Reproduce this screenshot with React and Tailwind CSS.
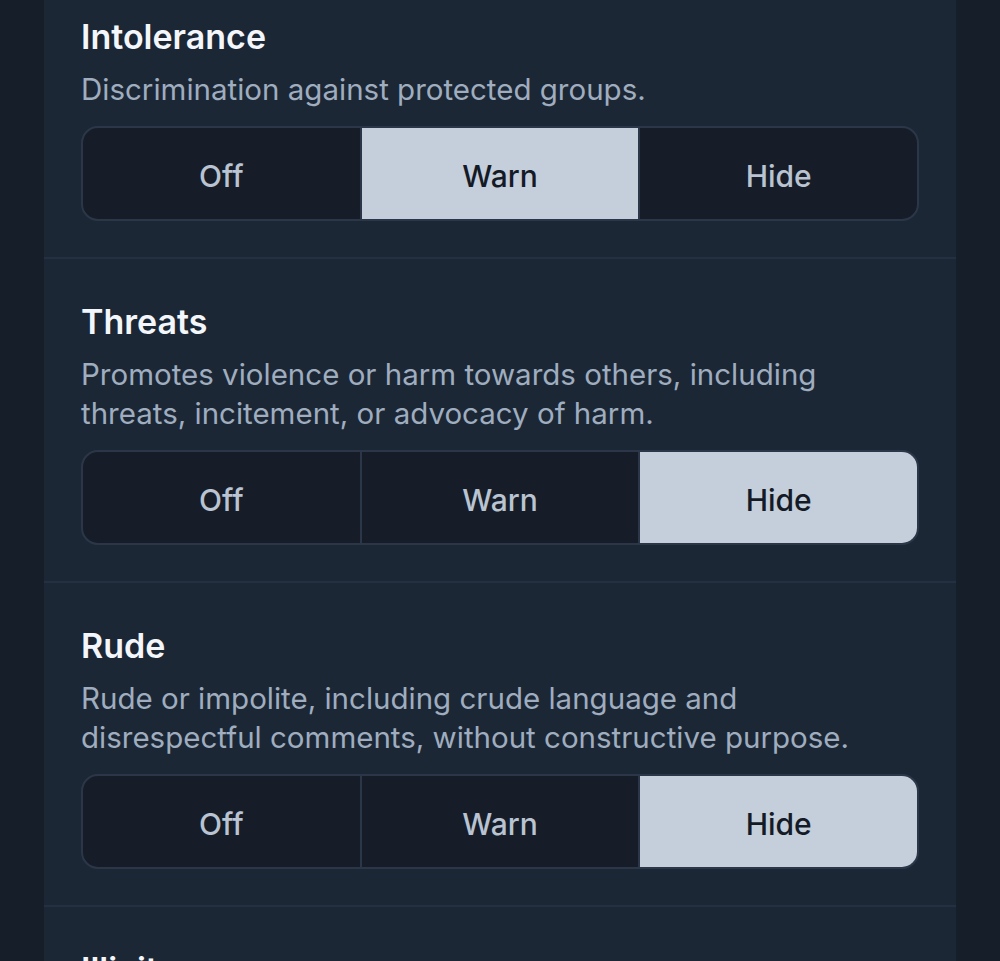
import { useState } from 'react'

const SECTIONS = [
  {
    title: 'Intolerance',
    desc: 'Discrimination against protected groups.',
    value: 'Warn',
  },
  {
    title: 'Threats',
    desc: 'Promotes violence or harm towards others, including threats, incitement, or advocacy of harm.',
    value: 'Hide',
  },
  {
    title: 'Rude',
    desc: 'Rude or impolite, including crude language and disrespectful comments, without constructive purpose.',
    value: 'Hide',
  },
  {
    title: 'Illicit',
    desc: 'Promoting or depicting illegal activities.',
    value: 'Warn',
  },
]

const OPTIONS = ['Off', 'Warn', 'Hide']

function Segmented({ value, onChange }) {
  return (
    <div className="flex h-[95px] rounded-[17px] border-2 border-[#2b3748] bg-[#161d28] overflow-hidden">
      {OPTIONS.map((opt, i) => {
        const active = opt === value
        return (
          <button
            key={opt}
            onClick={() => onChange(opt)}
            className={`flex-1 flex items-center justify-center pt-[5px] text-[30px] font-medium ${
              i > 0 ? 'border-l-2 border-[#2b3748]' : ''
            } ${active ? 'bg-[#c5cedb] text-[#141b26]' : 'text-[#b9c3d1]'}`}
          >
            {opt}
          </button>
        )
      })}
    </div>
  )
}

export default function App() {
  const [values, setValues] = useState(SECTIONS.map((s) => s.value))

  return (
    <div className="min-h-screen bg-[#161e29] overflow-hidden" style={{ fontFamily: 'Inter, "Noto Sans", sans-serif' }}>
      <div className="w-[912px] mx-auto bg-[#1c2736] -mt-[26px]">
        {SECTIONS.map((s, idx) => (
          <div
            key={s.title}
            className={`px-[37px] pt-[43px] pb-[36px] ${idx > 0 ? 'border-t-2 border-[#243042]' : ''}`}
          >
            <div className="text-[34px] leading-[40px] font-semibold text-[#f3f6fa]">{s.title}</div>
            <div className="mt-[13px] text-[29.5px] leading-[39px] text-[#9fadbf]">{s.desc}</div>
            <div className="mt-[17px]">
              <Segmented
                value={values[idx]}
                onChange={(v) => setValues(values.map((x, j) => (j === idx ? v : x)))}
              />
            </div>
          </div>
        ))}
      </div>
    </div>
  )
}
